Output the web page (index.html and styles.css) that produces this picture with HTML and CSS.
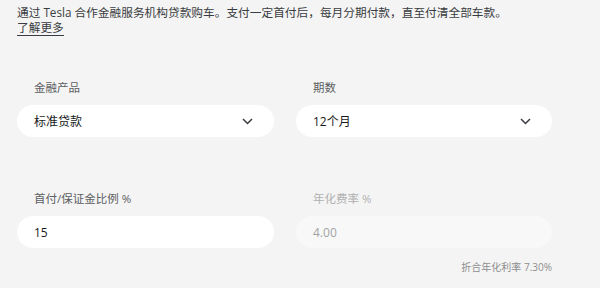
FILE: index.html
```html
<!DOCTYPE html>
<html>

<head>
    <meta charset="UTF-8">
    <title>金融方案</title>
    <link rel="stylesheet" href="styles.css">
</head>

<body>
    <div class="container">
        <p class="intro">
            通过 Tesla 合作金融服务机构贷款购车。支付一定首付后，每月分期付款，直至付清全部车款。<br>
            <a href="#" class="more">了解更多</a>
        </p>

        <div class="form-grid">
            <div class="field">
                <label>金融产品</label>
                <div class="select">
                    <span>标准贷款</span>
                    <svg class="chevron" width="11" height="7" viewBox="0 0 11 7"><path d="M1 1l4.5 4.5L10 1" fill="none" stroke="#393c41" stroke-width="1.5"/></svg>
                </div>
            </div>
            <div class="field">
                <label>期数</label>
                <div class="select">
                    <span>12个月</span>
                    <svg class="chevron" width="11" height="7" viewBox="0 0 11 7"><path d="M1 1l4.5 4.5L10 1" fill="none" stroke="#393c41" stroke-width="1.5"/></svg>
                </div>
            </div>
            <div class="field">
                <label>首付/保证金比例 %</label>
                <div class="input">15</div>
            </div>
            <div class="field">
                <label class="disabled">年化费率 %</label>
                <div class="input disabled">4.00</div>
                <div class="note">折合年化利率 7.30%</div>
            </div>
        </div>
    </div>
</body>

</html>
```

FILE: styles.css
```css
body {
    margin: 0;
    padding: 0;
    background-color: #f4f4f4;
    font-family: "Open Sans", "Noto Sans CJK SC", sans-serif;
    color: #393c41;
}

.container {
    width: 535px;
    padding: 5px 0 0 17px;
}

.intro {
    margin: 0;
    font-size: 11.7px;
    line-height: 15px;
    color: #393c41;
}

.more {
    color: #393c41;
    text-decoration: none;
    border-bottom: 1px solid #393c41;
}

.form-grid {
    display: grid;
    grid-template-columns: 257px 256px;
    column-gap: 22px;
    row-gap: 54px;
    margin-top: 45px;
}

label {
    display: block;
    font-size: 11.5px;
    line-height: 16px;
    color: #5c5e62;
    padding-left: 17px;
    margin-bottom: 9px;
}

label.disabled {
    color: #b0b0b0;
}

.select,
.input {
    height: 32px;
    border-radius: 16px;
    background-color: #ffffff;
    display: flex;
    align-items: center;
    justify-content: space-between;
    padding: 0 21px 0 17px;
    font-size: 12px;
    color: #171a20;
}

.chevron {
    display: block;
}

.input.disabled {
    background-color: #f8f8f8;
    color: #a2a3a5;
}

.note {
    margin-top: 13px;
    text-align: right;
    font-size: 10px;
    line-height: 12px;
    color: #8e8e8e;
}
```
